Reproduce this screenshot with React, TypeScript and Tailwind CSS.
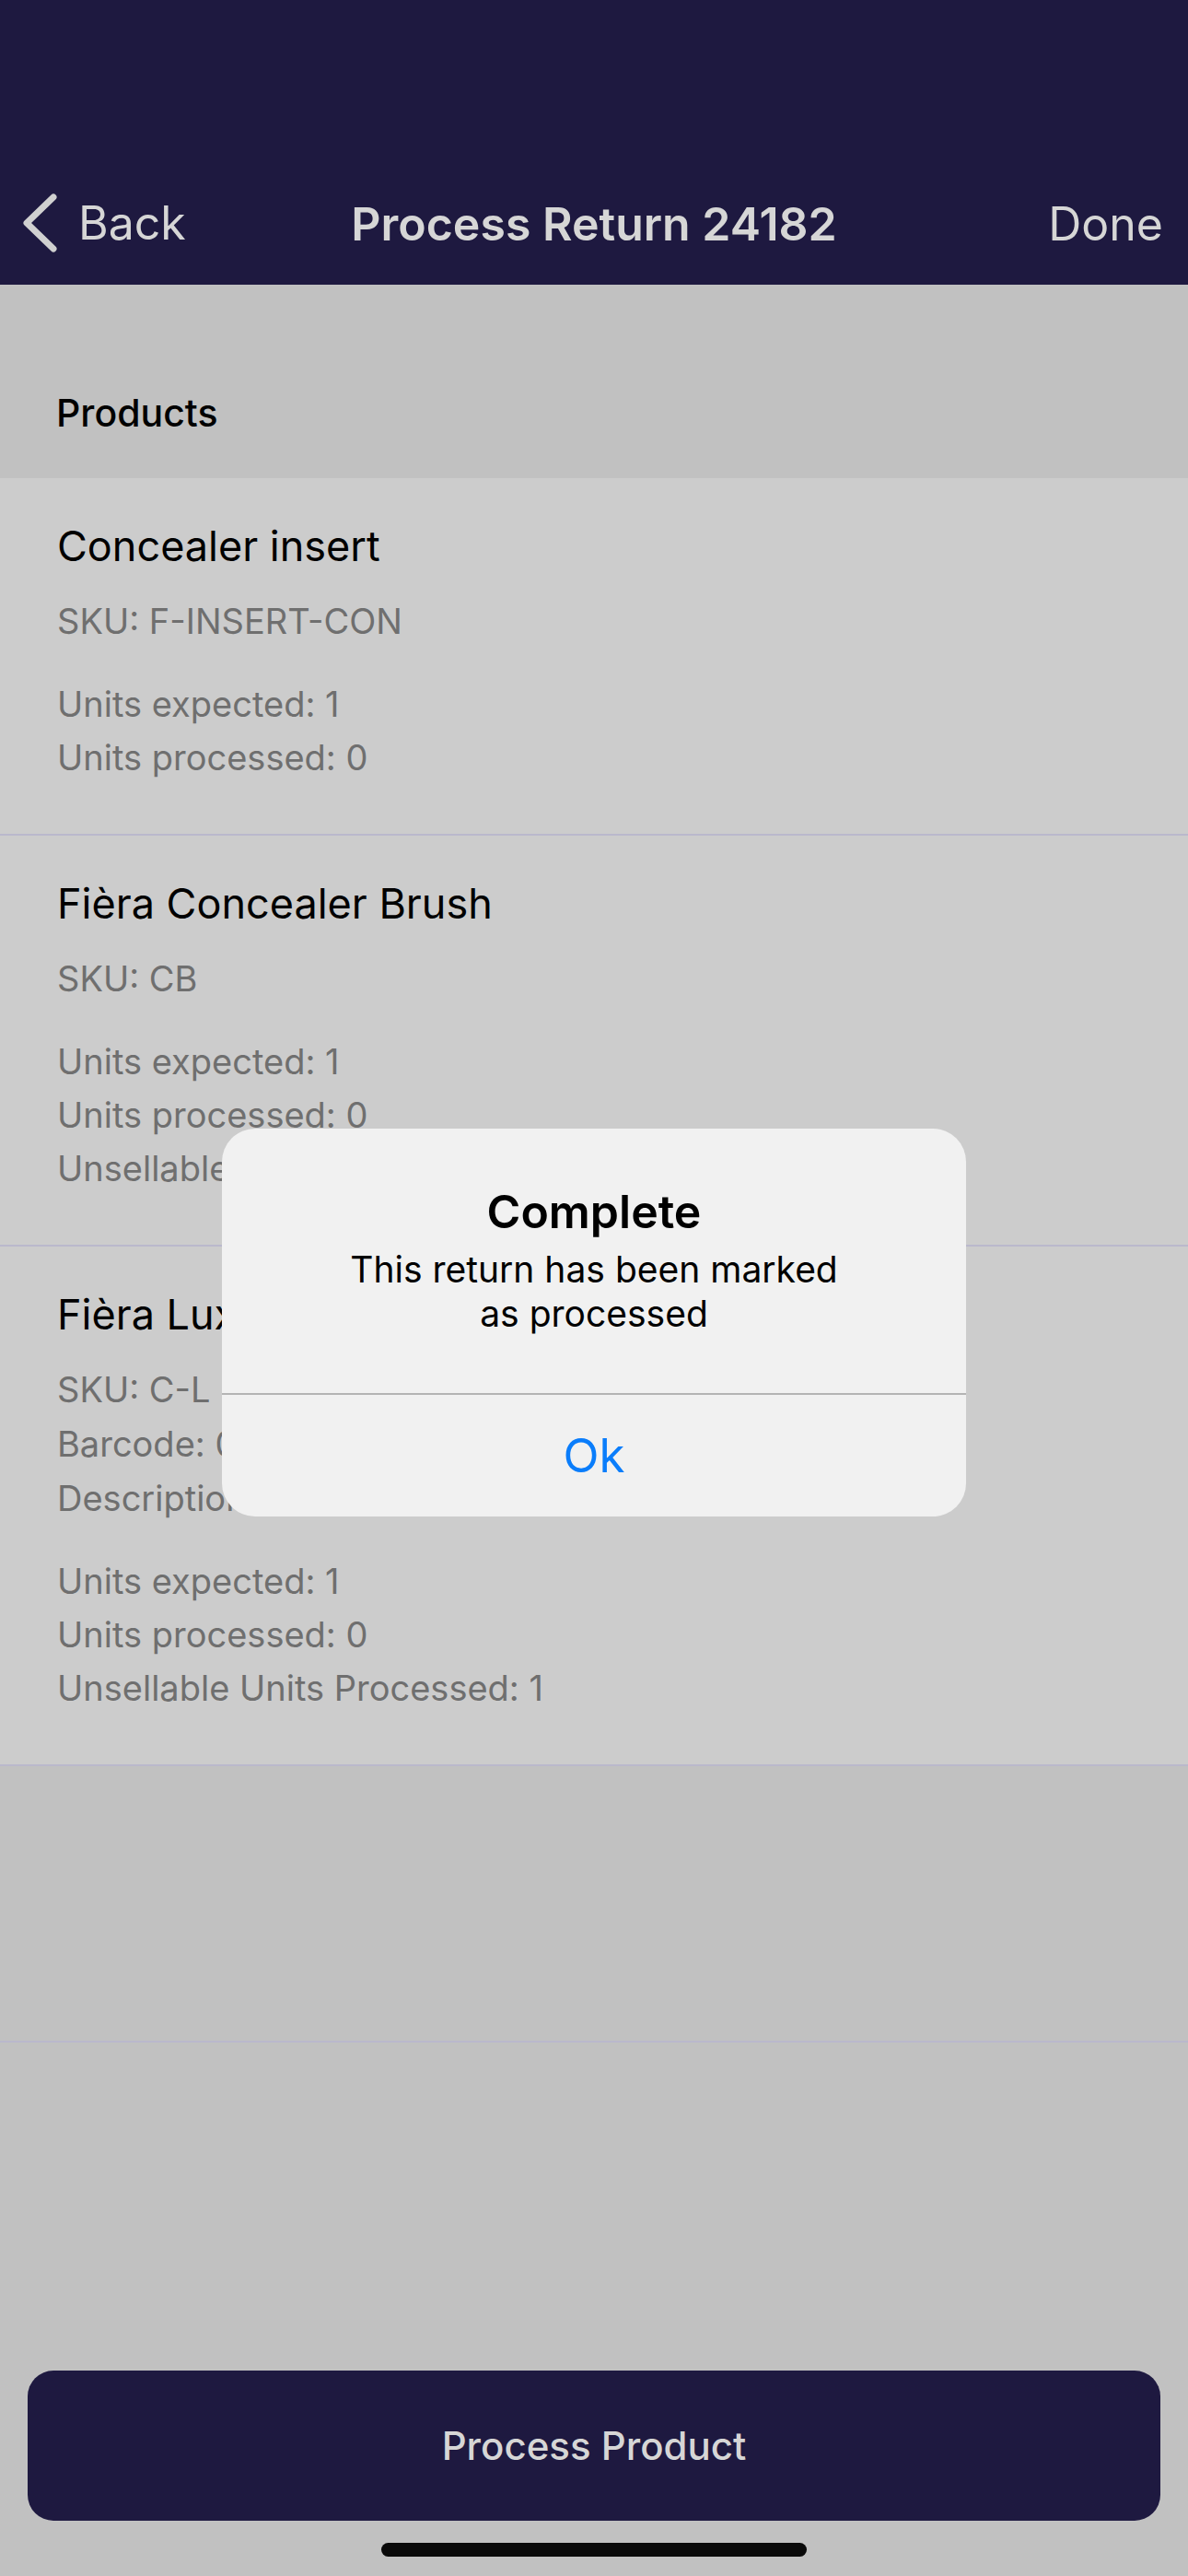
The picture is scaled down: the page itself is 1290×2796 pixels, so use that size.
import React from 'react'

type Product = {
  name: string
  details: string[]
  units: string[]
}

const products: Product[] = [
  {
    name: 'Concealer insert',
    details: ['SKU: F-INSERT-CON'],
    units: ['Units expected: 1', 'Units processed: 0'],
  },
  {
    name: 'Fièra Concealer Brush',
    details: ['SKU: CB'],
    units: ['Units expected: 1', 'Units processed: 0', 'Unsellable Units Processed: 1'],
  },
  {
    name: 'Fièra Luxe Concealer',
    details: ['SKU: C-L', 'Barcode: 0', 'Description: Concealer'],
    units: ['Units expected: 1', 'Units processed: 0', 'Unsellable Units Processed: 1'],
  },
]

const ProductRow = ({ item }: { item: Product }) => {
  return (
    <div className="bg-[#cccccc] border-b-2 border-[#bab8cc] pt-[46px] pb-[54px] pl-[62px]">
      <h2 className="text-[45px] leading-[56px] text-black">{item.name}</h2>
      <div className="mt-[24px] text-[38px] leading-[59px] text-[#6f6f6f]">
        {item.details.map((d) => (
          <p key={d}>{d}</p>
        ))}
      </div>
      <div className="mt-[31px] text-[38px] leading-[58px] text-[#6f6f6f]">
        {item.units.map((u) => (
          <p key={u}>{u}</p>
        ))}
      </div>
    </div>
  )
}

const App = () => {
  return (
    <div
      className="relative w-[1290px] h-[2796px] bg-[#c1c1c1] flex flex-col overflow-hidden"
      style={{ fontFamily: 'Inter, "Noto Sans", sans-serif' }}
    >
      {/* nav bar */}
      <div className="h-[309px] bg-[#1e1940] flex items-end pb-[35px] px-[25px] text-[#d6d6d6]">
        <div className="flex-1 flex items-center gap-[20px]">
          <svg width="40" height="64" viewBox="0 0 40 64" fill="none">
            <path d="M33 4 L4 32 L33 60" stroke="#d0d0d0" strokeWidth="7" strokeLinecap="round" strokeLinejoin="round" />
          </svg>
          <span className="text-[50px] leading-[62px]">Back</span>
        </div>
        <h1 className="text-[50px] leading-[62px] font-semibold">Process Return 24182</h1>
        <div className="flex-1 flex justify-end">
          <span className="text-[50px] leading-[62px] pr-[2px]">Done</span>
        </div>
      </div>

      {/* section header */}
      <div className="h-[210px] flex items-end pb-[47px] pl-[61px]">
        <h3 className="text-[41px] leading-[48px] font-medium text-black">Products</h3>
      </div>

      {/* products */}
      {products.map((p) => (
        <ProductRow key={p.name} item={p} />
      ))}

      <div className="h-[300px] border-b-2 border-[#bab8cc]" />

      <div className="flex-1" />

      {/* bottom button */}
      <div className="px-[30px] pb-[24px]">
        <button className="w-full h-[163px] rounded-[28px] bg-[#1e1940] text-[#d6d6d6] text-[42px] font-medium">
          Process Product
        </button>
      </div>
      <div className="h-[36px] flex justify-center">
        <div className="w-[462px] h-[15px] rounded-full bg-[#0a0a0a]" />
      </div>

      {/* alert */}
      <div className="absolute left-[241px] top-[1225px] w-[808px] h-[421px] rounded-[36px] bg-[#f1f1f1] flex flex-col overflow-hidden">
        <div className="flex-1 flex flex-col items-center pt-[60px] text-center">
          <h2 className="text-[50px] leading-[60px] font-semibold text-black">Complete</h2>
          <p className="mt-[9px] text-[39px] leading-[48px] text-black">
            This return has been marked
            <br />
            as processed
          </p>
        </div>
        <div className="h-[2px] bg-[#b4b4b4]" />
        <div className="h-[132px] flex items-center justify-center text-[51px] text-[#0a7dfb]">Ok</div>
      </div>
    </div>
  )
}

export default App
